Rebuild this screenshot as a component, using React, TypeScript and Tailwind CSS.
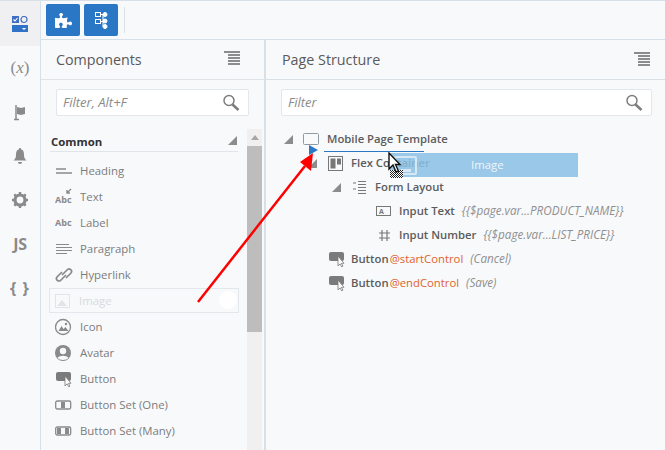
import type { ReactNode } from "react"
import { FaPuzzlePiece } from "react-icons/fa"

const Ic = ({ children, w = 18, h = 18 }: { children: ReactNode; w?: number; h?: number }) => (
  <svg width={w} height={h} viewBox={`0 0 ${w} ${h}`} className="shrink-0">
    {children}
  </svg>
)

const grey = "#8a8a8a"

const ButtonIcon = () => (
  <Ic>
    <rect x="1" y="2" width="15" height="9" rx="2" fill="#7b7b7b" />
    <path d="M10 6v10l2.200-2.200 1.500 3 1.200-.6-1.400-2.900H16z" fill="#fff" stroke="#777" strokeWidth="0.8" />
  </Ic>
)

const MenuLines = ({ className }: { className: string }) => (
  <div className={`flex w-[16px] flex-col items-end gap-px ${className}`}>
    <div className="h-[2px] w-[16px] bg-[#8c8c8c]" />
    <div className="h-[2px] w-[12px] bg-[#8c8c8c]" />
    <div className="h-[2px] w-[12px] bg-[#8c8c8c]" />
    <div className="h-[2px] w-[12px] bg-[#8c8c8c]" />
    <div className="h-[2px] w-[12px] bg-[#8c8c8c]" />
  </div>
)

const SearchIcon = () => (
  <svg width="18" height="18" viewBox="0 0 18 18" fill="none" stroke="#7d7d7d">
    <circle cx="7" cy="6.500" r="5" strokeWidth="1.500" />
    <path d="M10.500 10.500l6 5.500" strokeWidth="2.500" />
  </svg>
)

const components: { label: string; icon: ReactNode }[] = [
  {
    label: "Heading",
    icon: (
      <Ic>
        <path d="M1 7h10M1 11h16" stroke={grey} strokeWidth="1.600" />
      </Ic>
    ),
  },
  {
    label: "Text",
    icon: (
      <Ic>
        <text x="0" y="15" fontSize="9" fontWeight="700" fill={grey} fontFamily="'Open Sans', sans-serif">Abc</text>
        <path d="M16 1l-4 4M12 2v3h3" stroke={grey} strokeWidth="1.400" fill="none" />
      </Ic>
    ),
  },
  {
    label: "Label",
    icon: (
      <Ic>
        <text x="0" y="12" fontSize="9" fontWeight="700" fill={grey} fontFamily="'Open Sans', sans-serif">Abc</text>
      </Ic>
    ),
  },
  {
    label: "Paragraph",
    icon: (
      <Ic>
        <path d="M1 4.500h13M1 7.500h16M1 10.500h16M1 13.500h11" stroke={grey} strokeWidth="1" />
      </Ic>
    ),
  },
  {
    label: "Hyperlink",
    icon: (
      <Ic>
        <path d="M7 9l5-5a2.500 2.500 0 0 1 4 3l-5 5M11 9l-5 5a2.500 2.500 0 0 1-4-3l5-5" stroke={grey} strokeWidth="1.700" fill="none" />
      </Ic>
    ),
  },
  {
    label: "Image",
    icon: (
      <Ic>
        <rect x="1.500" y="2.500" width="14" height="13" fill="none" stroke="#e2e4e8" />
        <path d="M3 14l5-6 5 6z" fill="#e2e4e8" />
      </Ic>
    ),
  },
  {
    label: "Icon",
    icon: (
      <Ic>
        <circle cx="8" cy="9" r="7.500" fill="none" stroke={grey} strokeWidth="1.300" />
        <path d="M3.500 13l3-5 2 3 2-2 3 4z" fill={grey} />
        <circle cx="11" cy="6" r="1.200" fill={grey} />
      </Ic>
    ),
  },
  {
    label: "Avatar",
    icon: (
      <Ic>
        <circle cx="8" cy="9" r="8" fill={grey} />
        <circle cx="8" cy="7" r="3.200" fill="#f8f9fb" />
        <path d="M2.500 14c2-3 9-3 11 0-2 2.500-9 2.500-11 0z" fill="#f8f9fb" />
      </Ic>
    ),
  },
  { label: "Button", icon: <ButtonIcon /> },
  {
    label: "Button Set (One)",
    icon: (
      <Ic>
        <rect x="0.700" y="5" width="15" height="8" rx="1.500" fill="none" stroke={grey} strokeWidth="1.300" />
        <rect x="6" y="6" width="4" height="6" fill={grey} />
      </Ic>
    ),
  },
  {
    label: "Button Set (Many)",
    icon: (
      <Ic>
        <rect x="0.700" y="5" width="15" height="8" rx="1.500" fill="none" stroke={grey} strokeWidth="1.300" />
        <rect x="2" y="6" width="4" height="6" fill={grey} />
        <rect x="10" y="6" width="4" height="6" fill={grey} />
      </Ic>
    ),
  },
]

const railIcons: ReactNode[] = [
  <span className="font-['Liberation_Serif',serif] text-[17px] text-[#8a8a8a]">
    (<span className="italic">x</span>)
  </span>,
  <Ic>
    <path d="M5 2v14M3 16.500h5" stroke={grey} strokeWidth="1.500" />
    <path d="M6 4l4 1 4-1v7l-4 1-4-1z" fill={grey} />
  </Ic>,
  <Ic>
    <path d="M9 1c-.8 0-1 .6-1 1.200C5.500 3 5 5 5 8c0 3-1 4-2.500 5.500h13C14 12 13 11 13 8c0-3-.5-5-3-5.800C10 1.600 9.800 1 9 1z" fill={grey} />
    <path d="M7 15h4a2 2 0 0 1-4 0z" fill={grey} />
  </Ic>,
  <Ic>
    <circle cx="9" cy="9" r="5" fill="none" stroke={grey} strokeWidth="3.200" />
    <path d="M9 1v4M9 13v4M1 9h4M13 9h4M3.300 3.300l2.800 2.800M11.900 11.900l2.800 2.800M14.700 3.300l-2.800 2.800M6.100 11.900l-2.800 2.800" stroke={grey} strokeWidth="2.400" />
  </Ic>,
  <span className="text-[16px] font-bold tracking-tight text-[#8a8a8a]">JS</span>,
  <span className="text-[16px] font-bold tracking-[1px] text-[#8a8a8a]">{"{ }"}</span>,
]

const Disclosure = ({ className = "" }: { className?: string }) => (
  <svg width="9" height="9" viewBox="0 0 9 9" className={`shrink-0 ${className}`}>
    <path d="M9 0v9H0z" fill="#8c8c8c" />
  </svg>
)

const Name = ({ children, className }: { children: ReactNode; className: string }) => (
  <span className={`text-[11.300px] font-semibold text-[#5c5c5c] ${className}`}>{children}</span>
)

const Hint = ({ children, className = "ml-[7px]" }: { children: ReactNode; className?: string }) => (
  <span className={`text-[11.700px] italic text-[#8f8f8f] ${className}`}>{children}</span>
)

const Slot = ({ children }: { children: ReactNode }) => (
  <span className="ml-px text-[11.300px] text-[#e0632c]">{children}</span>
)

const Row = ({ className, children }: { className: string; children: ReactNode }) => (
  <div className={`flex h-[24px] items-center ${className}`}>{children}</div>
)

export default function App() {
  return (
    <div className="relative flex h-[450px] w-[665px] overflow-hidden bg-[#f8f9fb] font-['Open_Sans',sans-serif]">
      {/* left rail */}
      <div className="flex w-[41px] shrink-0 flex-col items-center border-r border-t border-[#d6e0e8]">
        <div className="flex h-[45px] w-full items-center justify-center bg-[#f0f0f2]">
          <svg width="16" height="16" viewBox="0 0 16 16">
            <rect x="0" y="0" width="7" height="7" fill="#3f6fc4" />
            <path d="M1.500 3.500l1.500 1.500 2.500-3" stroke="#fff" strokeWidth="1.100" fill="none" />
            <circle cx="12" cy="3.500" r="3" fill="none" stroke="#4a6fc0" strokeWidth="1.200" />
            <rect x="0" y="9" width="16" height="7" fill="#2f72c8" />
            <path d="M10 12h4l-2 2z" fill="#fff" />
          </svg>
        </div>
        {railIcons.map((icon, i) => (
          <div key={i} className="flex h-[44px] w-full items-center justify-center">
            {icon}
          </div>
        ))}
      </div>

      <div className="flex min-w-0 flex-1 flex-col">
        {/* toolbar */}
        <div className="flex h-[40px] shrink-0 items-center gap-[4px] border-b border-t border-[#d6e0e8] pl-[5px]">
          <div className="flex h-[32px] w-[34px] items-center justify-center rounded-[2px] bg-[#2a78c5]">
            <FaPuzzlePiece size={17} color="#fff" />
          </div>
          <div className="flex h-[32px] w-[34px] items-center justify-center rounded-[2px] bg-[#2a78c5]">
            <svg width="14" height="17" viewBox="0 0 14 17" fill="none" stroke="#fff">
              <rect x="1.500" y="0.500" width="5" height="4" />
              <rect x="1.500" y="7.500" width="5" height="4" />
              <path d="M6.500 2.500h5M6.500 9.500h5M9 2.500v12h2.500" />
              <circle cx="11" cy="2.500" r="2" fill="#fff" />
              <circle cx="11" cy="9" r="2" fill="#fff" />
              <circle cx="11" cy="14.500" r="2" fill="#fff" />
            </svg>
          </div>
          <div className="ml-[2px] h-[26px] w-px bg-[#dcdfe3]" />
        </div>

        <div className="flex min-h-0 flex-1">
          {/* components panel */}
          <div className="flex w-[225px] shrink-0 flex-col border-r-[2px] border-[#d8e0e6]">
            <div className="flex h-[40px] shrink-0 items-center justify-between border-b border-[#dfe4e9] pl-[15px] pr-[24px]">
              <span className="text-[14.300px] text-[#5a5a5a]">Components</span>
              <MenuLines className="mb-[3px]" />
            </div>
            <div className="ml-[15px] mr-[15px] mt-[9px] flex h-[27px] shrink-0 items-center justify-between rounded-[2px] border border-[#e3e6ea] bg-white pl-[6px] pr-[8px]">
              <span className="text-[13px] italic text-[#8a8a8a]">Filter, Alt+F</span>
              <SearchIcon />
            </div>
            <div className="mt-[13px] flex min-h-0 flex-1">
              <div className="min-w-0 flex-1 pl-[9px] pr-[9px]">
                <div className="flex h-[23px] items-center justify-between border-b border-[#e1e4e8] pl-px pr-[1px] pt-[3px]">
                  <span className="text-[11.400px] font-bold text-[#333]">Common</span>
                  <Disclosure className="mb-[3px]" />
                </div>
                <div className="mt-[6px]">
                  {components.map((c) =>
                    c.label === "Image" ? (
                      <div key={c.label} className="relative -mx-px mb-px flex h-[25px] items-center gap-[7px] border border-[#e3e6ea] pl-[4px]">
                        {c.icon}
                        <span className="text-[11.400px] text-[#d7d9dc]">{c.label}</span>
                        <div className="absolute right-px top-[2px] h-[18px] w-[18px] rounded-full bg-white" />
                      </div>
                    ) : (
                      <div key={c.label} className="flex h-[26px] items-center gap-[7px] pl-[5px]">
                        {c.icon}
                        <span className="text-[11.400px] text-[#7c7c7c]">{c.label}</span>
                      </div>
                    ),
                  )}
                </div>
              </div>
              {/* scrollbar */}
              <div className="mr-[2px] flex w-[15px] shrink-0 flex-col items-center bg-[#f0f0f0]">
                <div className="flex h-[17px] items-center">
                  <svg width="8" height="5" viewBox="0 0 8 5">
                    <path d="M0 5l4-5 4 5z" fill="#a6a6a6" />
                  </svg>
                </div>
                <div className="h-[186px] w-full bg-[#bdbdbd]" />
              </div>
            </div>
          </div>

          {/* page structure panel */}
          <div className="flex min-w-0 flex-1 flex-col">
            <div className="flex h-[40px] shrink-0 items-center justify-between border-b border-[#d8e0e6] pl-[16px] pr-[15px]">
              <span className="text-[14.300px] text-[#5a5a5a]">Page Structure</span>
              <MenuLines className="mb-[2px]" />
            </div>
            <div className="ml-[15px] mr-[13px] mt-[9px] flex h-[27px] shrink-0 items-center justify-between rounded-[2px] border border-[#e3e6ea] bg-white pl-[6px] pr-[8px]">
              <span className="text-[13px] italic text-[#8a8a8a]">Filter</span>
              <SearchIcon />
            </div>
            <div className="mt-[11px]">
              <Row className="pl-[18px]">
                <Disclosure />
                <div className="ml-[10px] flex">
                  <Ic w={16} h={14}>
                    <rect x="0.500" y="1.500" width="15" height="11" rx="1" fill="none" stroke="#8f9aa5" />
                  </Ic>
                </div>
                <Name className="ml-[8px]">Mobile Page Template</Name>
              </Row>
              <Row className="pl-[42px]">
                <Disclosure />
                <div className="ml-[11px] flex">
                  <Ic w={15} h={15}>
                    <rect x="0.500" y="0.500" width="14" height="14" fill="none" stroke="#777" />
                    <rect x="2.500" y="2.500" width="5" height="10" fill="#777" />
                    <rect x="9" y="2.500" width="4" height="6" fill="#777" />
                  </Ic>
                </div>
                <Name className="ml-[8px]">Flex Container</Name>
              </Row>
              <Row className="pl-[66px]">
                <Disclosure />
                <div className="ml-[11px] flex">
                  <Ic w={15} h={15}>
                    <path d="M6 1.500h8M6 4.500h8M6 7.500h8M6 10.500h8M6 13.500h8M1 3h3M1 9h3" stroke="#777" strokeWidth="1.200" />
                  </Ic>
                </div>
                <Name className="ml-[8px]">Form Layout</Name>
              </Row>
              <Row className="pl-[90px]">
                <div className="ml-[20px] flex">
                  <Ic w={15} h={12}>
                    <rect x="0.500" y="1.500" width="14" height="9" fill="none" stroke="#777" />
                    <text x="3" y="8.500" fontSize="7" fontWeight="700" fill="#777">A</text>
                  </Ic>
                </div>
                <Name className="ml-[8px]">Input Text</Name>
                <Hint>{"{{$page.var...PRODUCT_NAME}}"}</Hint>
              </Row>
              <Row className="pl-[90px]">
                <div className="ml-[22px] flex">
                  <Ic w={13} h={13}>
                    <path d="M4 1v11M9 1v11M1 4h11M1 9h11" stroke="#777" strokeWidth="1.200" />
                  </Ic>
                </div>
                <Name className="ml-[8px]">Input Number</Name>
                <Hint>{"{{$page.var...LIST_PRICE}}"}</Hint>
              </Row>
              <Row className="pl-[42px]">
                <div className="ml-[20px] flex">
                  <ButtonIcon />
                </div>
                <Name className="ml-[5px]">Button</Name>
                <Slot>@startControl</Slot>
                <Hint>(Cancel)</Hint>
              </Row>
              <Row className="pl-[42px]">
                <div className="ml-[20px] flex">
                  <ButtonIcon />
                </div>
                <Name className="ml-[5px]">Button</Name>
                <Slot>@endControl</Slot>
                <Hint>(Save)</Hint>
              </Row>
            </div>
          </div>
        </div>
      </div>

      {/* insertion line */}
      <div className="absolute left-[324px] top-[151px] h-px w-[100px] bg-[#2a78c5]" />

      {/* drag ghost */}
      <div className="absolute left-[390px] top-[153px] flex h-[24px] w-[188px] items-center bg-[#8ac0e4]/85">
        <div className="ml-[4px] flex h-[19px] w-[23px] items-end justify-center rounded-[2px] border-2 border-[#d7e8f4]">
          <div className="mb-px h-[3px] w-[10px] bg-[#d7e8f4]" />
        </div>
        <span className="ml-[54px] text-[11.400px] text-[#eef6fb]">Image</span>
      </div>

      {/* cursor */}
      <svg width="16" height="26" viewBox="0 0 16 26" className="absolute left-[388px] top-[152px]">
        <defs>
          <pattern id="drag-dots" width="2" height="2" patternUnits="userSpaceOnUse">
            <rect width="2" height="2" fill="#fff" />
            <rect width="1" height="1" fill="#222" />
            <rect x="1" y="1" width="1" height="1" fill="#222" />
          </pattern>
        </defs>
        <rect x="2" y="18" width="13" height="8" fill="url(#drag-dots)" />
        <path d="M1 1v16l4-4 3 7 2.500-1-3-6.500H12z" fill="#fff" stroke="#111" strokeWidth="1.400" />
      </svg>

      {/* red arrow */}
      <svg width="140" height="180" viewBox="0 0 140 180" className="absolute left-[190px] top-[130px]">
        <path d="M8 172L115 36" stroke="#ff0000" strokeWidth="2.500" fill="none" />
        <path d="M123 23L110 32L121 41z" fill="#ff0000" />
      </svg>

      {/* drop marker */}
      <svg width="9" height="10" viewBox="0 0 9 10" className="absolute left-[309px] top-[145px]">
        <path d="M0 0l9 5-9 5z" fill="#2a78c5" />
      </svg>
    </div>
  )
}
